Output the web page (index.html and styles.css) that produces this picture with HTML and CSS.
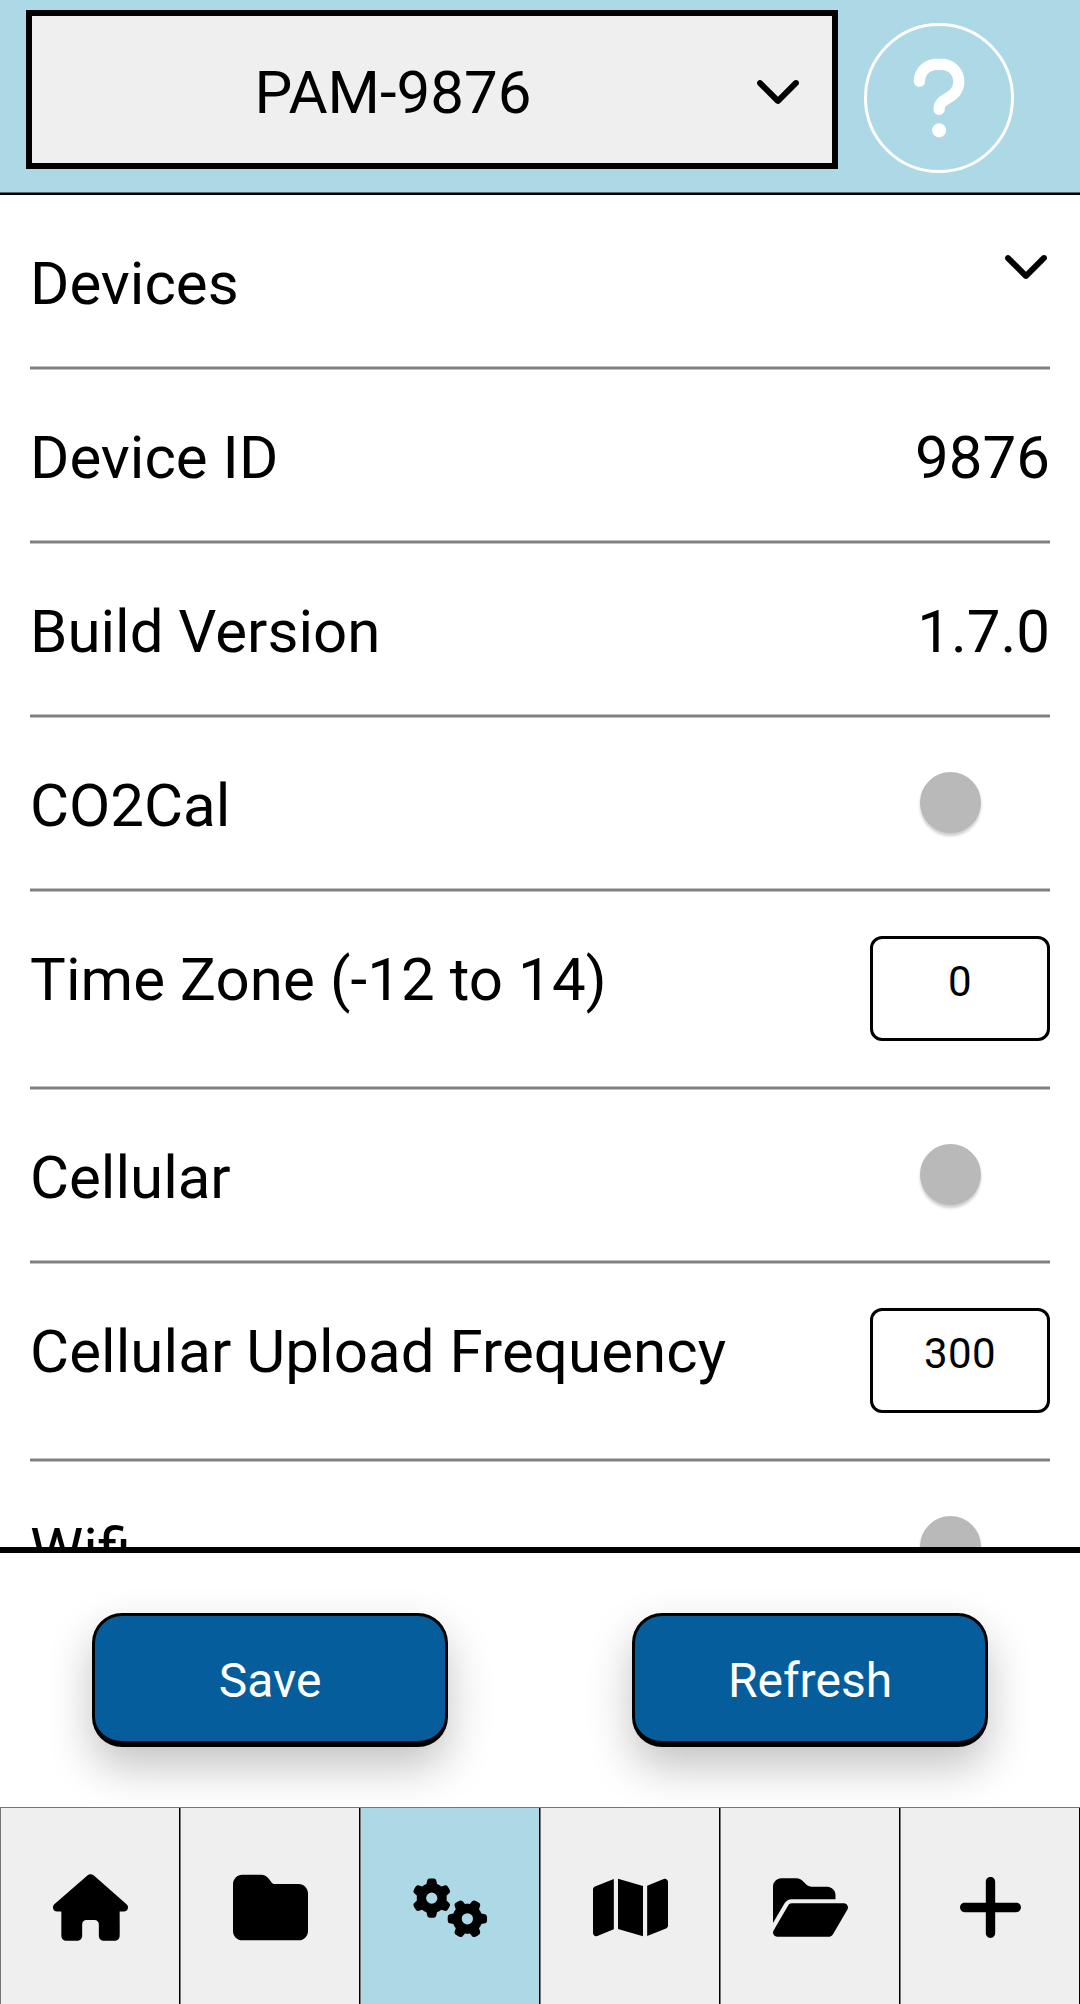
FILE: index.html
```html
<!DOCTYPE html>
<html lang="en">
<head>
<meta charset="utf-8">
<title>PAM-9876 Settings</title>
<link rel="stylesheet" href="styles.css">
</head>
<body>
<div class="app">
  <header class="header">
    <div class="select">
      <span class="select-label">PAM-9876</span>
      <svg class="chevron select-chevron" viewBox="0 0 512 512"><path d="M233.4 406.6c12.5 12.5 32.8 12.5 45.3 0l192-192c12.5-12.5 12.5-32.8 0-45.3s-32.8-12.5-45.3 0L256 338.7 86.6 169.4c-12.5-12.5-32.8-12.5-45.3 0s-12.5 32.8 0 45.3l192 192z"/></svg>
    </div>
    <div class="help">
      <svg class="help-icon" viewBox="0 0 320 512"><path d="M80 160c0-35.3 28.7-64 64-64h32c35.3 0 64 28.7 64 64v3.6c0 21.8-11.1 42.1-29.4 53.8l-42.2 27.1c-25.2 16.2-40.4 44.1-40.4 74V320c0 17.7 14.3 32 32 32s32-14.3 32-32v-1.4c0-8.2 4.2-15.8 11-20.2l42.2-27.1c36.6-23.6 58.8-64.1 58.8-107.7V160c0-70.7-57.3-128-128-128H144C73.3 32 16 89.3 16 160c0 17.7 14.3 32 32 32s32-14.3 32-32zm80 320a40 40 0 1 0 0-80 40 40 0 1 0 0 80z"/></svg>
    </div>
  </header>

  <main class="list">
    <div class="row">
      <span class="label">Devices</span>
      <svg class="chevron row-chevron" viewBox="0 0 512 512"><path d="M233.4 406.6c12.5 12.5 32.8 12.5 45.3 0l192-192c12.5-12.5 12.5-32.8 0-45.3s-32.8-12.5-45.3 0L256 338.7 86.6 169.4c-12.5-12.5-32.8-12.5-45.3 0s-12.5 32.8 0 45.3l192 192z"/></svg>
    </div>
    <hr class="rule">
    <div class="row"><span class="label">Device ID</span><span class="label">9876</span></div>
    <hr class="rule">
    <div class="row"><span class="label">Build Version</span><span class="label">1.7.0</span></div>
    <hr class="rule">
    <div class="row"><span class="label">CO2Cal</span><span class="toggle"></span></div>
    <hr class="rule">
    <div class="row row-tall"><span class="label">Time Zone (-12 to 14)</span><span class="field">0</span></div>
    <hr class="rule">
    <div class="row"><span class="label">Cellular</span><span class="toggle"></span></div>
    <hr class="rule">
    <div class="row row-tall"><span class="label">Cellular Upload Frequency</span><span class="field">300</span></div>
    <hr class="rule">
    <div class="row"><span class="label">Wifi</span><span class="toggle"></span></div>
  </main>

  <section class="actions">
    <div class="action"><button class="button">Save</button></div>
    <div class="action"><button class="button">Refresh</button></div>
  </section>

  <nav class="tabs">
    <div class="tab"><svg class="icon" viewBox="0 0 576 512"><path d="M575.8 255.5c0 18-15 32.1-32 32.1h-32l.7 160.2c0 2.7-.2 5.4-.5 8.1V472c0 22.1-17.9 40-40 40H456c-1.1 0-2.2 0-3.3-.1c-1.4 .1-2.8 .1-4.2 .1H416 392c-22.1 0-40-17.9-40-40V448 384c0-17.7-14.3-32-32-32H256c-17.7 0-32 14.3-32 32v64 24c0 22.1-17.9 40-40 40H160 128.1c-1.5 0-3-.1-4.5-.2c-1.2 .1-2.4 .2-3.6 .2H104c-22.1 0-40-17.9-40-40V360c0-.9 0-1.9 .1-2.8V287.6H32c-18 0-32-14-32-32.1c0-9 3-17 10-24L266.4 8c7-7 15-8 22-8s15 2 21 7L564.8 231.5c8 7 12 15 11 24z"/></svg></div>
    <div class="tab"><svg class="icon" viewBox="0 0 512 512"><path d="M64 480H448c35.3 0 64-28.7 64-64V160c0-35.3-28.7-64-64-64H288c-10.1 0-19.6-4.7-25.6-12.8L243.2 57.6C231.1 41.5 212.1 32 192 32H64C28.7 32 0 60.7 0 96V416c0 35.3 28.7 64 64 64z"/></svg></div>
    <div class="tab tab-active"><svg class="icon" viewBox="0 0 640 512"><path d="M308.5 135.3c7.1-6.3 9.9-16.2 6.2-25c-2.3-5.3-4.8-10.5-7.6-15.5L304 89.4c-3-5-6.3-9.9-9.8-14.6c-5.7-7.6-15.7-10.1-24.7-7.1l-28.2 9.3c-10.7-8.8-23-16-36.2-20.9L199 27.1c-1.9-9.3-9.1-16.7-18.5-17.8C173.9 8.4 167.2 8 160.4 8h-.7c-6.8 0-13.5 .4-20.1 1.2c-9.4 1.1-16.6 8.6-18.5 17.8L115 56.1c-13.3 5-25.5 12.1-36.2 20.9L50.5 67.8c-9-3-19-.5-24.7 7.1c-3.5 4.7-6.8 9.6-9.9 14.6l-3 5.3c-2.8 5-5.3 10.2-7.6 15.6c-3.7 8.7-.9 18.6 6.2 25l22.2 19.8C32.6 161.9 32 168.9 32 176s.6 14.1 1.7 20.9L11.5 216.7c-7.1 6.3-9.9 16.2-6.2 25c2.3 5.3 4.8 10.5 7.6 15.6l3 5.2c3 5.1 6.3 9.9 9.9 14.6c5.7 7.6 15.7 10.1 24.7 7.1l28.2-9.3c10.7 8.8 23 16 36.2 20.9l6.1 29.1c1.9 9.3 9.1 16.7 18.5 17.8c6.7 .8 13.5 1.2 20.4 1.2s13.7-.4 20.4-1.2c9.4-1.1 16.6-8.6 18.5-17.8l6.1-29.1c13.3-5 25.5-12.1 36.2-20.9l28.2 9.3c9 3 19 .5 24.7-7.1c3.5-4.7 6.8-9.5 9.8-14.6l3.1-5.4c2.8-5 5.3-10.2 7.6-15.5c3.7-8.7 .9-18.6-6.2-25l-22.2-19.8c1.1-6.8 1.7-13.8 1.7-20.9s-.6-14.1-1.7-20.9l22.2-19.8zM112 176a48 48 0 1 1 96 0 48 48 0 1 1 -96 0zM504.7 500.5c6.3 7.1 16.2 9.9 25 6.2c5.3-2.3 10.5-4.8 15.5-7.6l5.4-3.1c5-3 9.9-6.3 14.6-9.8c7.6-5.7 10.1-15.7 7.1-24.7l-9.3-28.2c8.8-10.7 16-23 20.9-36.2l29.1-6.1c9.3-1.9 16.7-9.1 17.8-18.5c.8-6.7 1.2-13.5 1.2-20.4s-.4-13.7-1.2-20.4c-1.1-9.4-8.6-16.6-17.8-18.5L583.9 307c-5-13.3-12.1-25.5-20.9-36.2l9.3-28.2c3-9 .5-19-7.1-24.7c-4.7-3.5-9.6-6.8-14.6-9.9l-5.3-3c-5-2.8-10.2-5.3-15.6-7.6c-8.7-3.7-18.6-.9-25 6.2l-19.8 22.2c-6.8-1.1-13.8-1.7-20.9-1.7s-14.1 .6-20.9 1.7l-19.8-22.2c-6.3-7.1-16.2-9.9-25-6.2c-5.3 2.3-10.5 4.8-15.6 7.6l-5.2 3c-5.1 3-9.9 6.3-14.6 9.9c-7.6 5.7-10.1 15.7-7.1 24.7l9.3 28.2c-8.8 10.7-16 23-20.9 36.2L315.1 313c-9.3 1.9-16.7 9.1-17.8 18.5c-.8 6.7-1.2 13.5-1.2 20.4s.4 13.7 1.2 20.4c1.1 9.4 8.6 16.6 17.8 18.5l29.1 6.1c5 13.3 12.1 25.5 20.9 36.2l-9.3 28.2c-3 9-.5 19 7.1 24.7c4.7 3.5 9.5 6.8 14.6 9.8l5.4 3.1c5 2.8 10.2 5.3 15.5 7.6c8.7 3.7 18.6 .9 25-6.2l19.8-22.2c6.8 1.1 13.8 1.7 20.9 1.7s14.1-.6 20.9-1.7l19.8 22.2zM464 304a48 48 0 1 1 0 96 48 48 0 1 1 0-96z"/></svg></div>
    <div class="tab"><svg class="icon" viewBox="0 0 576 512"><path d="M384 476.1L192 421.2V35.9L384 90.8V476.1zm32-1.2V88.4L543.1 37.5c15.8-6.3 32.9 5.3 32.9 22.3V394.6c0 9.8-6 18.6-15.1 22.3L416 474.8zM15.1 95.1L160 37.2V423.6L32.9 474.5C17.1 480.8 0 469.2 0 452.2V117.4c0-9.8 6-18.6 15.1-22.3z"/></svg></div>
    <div class="tab"><svg class="icon" viewBox="0 0 576 512"><path d="M88.7 223.8L0 375.8V96C0 60.7 28.7 32 64 32H181.5c17 0 33.3 6.7 45.3 18.7l26.5 26.5c12 12 28.3 18.7 45.3 18.7H416c35.3 0 64 28.7 64 64v32H144c-22.8 0-43.8 12.1-55.3 31.8zm27.6 16.1C122.1 230 132.6 224 144 224H544c11.5 0 22 6.1 27.7 16.1s5.7 22.2-.1 32.1l-112 192C453.9 474 443.4 480 432 480H32c-11.5 0-22-6.1-27.7-16.1s-5.7-22.2 .1-32.1l112-192z"/></svg></div>
    <div class="tab"><svg class="icon" viewBox="0 0 448 512"><path d="M256 80c0-17.7-14.3-32-32-32s-32 14.3-32 32V224H48c-17.7 0-32 14.3-32 32s14.3 32 32 32H192V432c0 17.7 14.3 32 32 32s32-14.3 32-32V288H400c17.7 0 32-14.3 32-32s-14.3-32-32-32H256V80z"/></svg></div>
  </nav>
</div>
</body>
</html>
```

FILE: styles.css
```css
* {
  box-sizing: border-box;
}

body {
  margin: 0;
  background: #fff;
  color: #000;
  font-family: Roboto, "Liberation Sans", sans-serif;
  font-size: 60px;
}

.app {
  display: flex;
  flex-direction: column;
  width: 1080px;
  height: 2004px;
  overflow: hidden;
}

.header {
  display: flex;
  align-items: flex-start;
  flex: none;
  gap: 26px;
  height: 195px;
  padding: 10px 26px 0;
  background: #add8e6;
  box-shadow: inset 0 -2px #000, inset 0 -3px #56676d;
}

.select {
  display: flex;
  align-items: center;
  width: 812px;
  height: 159px;
  padding-right: 30px;
  border: 6px solid #000;
  background: #efefef;
}

.select-label {
  flex: 1;
  padding-top: 6px;
  line-height: 70px;
  text-align: center;
}

.chevron {
  flex: none;
  width: 48px;
  height: 48px;
}

.select-chevron {
  margin-bottom: 2px;
}

.help {
  display: flex;
  align-items: center;
  justify-content: center;
  width: 150px;
  height: 150px;
  margin-top: 13px;
  border: 3px solid #fff;
  border-radius: 50%;
}

.help-icon {
  height: 90px;
  fill: #fff;
}

.list {
  flex: none;
  height: 1358px;
  padding: 1px 30px 0;
  border-bottom: 6px solid #000;
  overflow: hidden;
}

.row {
  display: flex;
  align-items: flex-start;
  justify-content: space-between;
  height: 170px;
}

.row-tall {
  height: 194px;
}

.label {
  margin-top: 53px;
  line-height: 70px;
}

.row-tall .label {
  letter-spacing: 0.08px;
}

.row-chevron {
  margin-top: 44px;
}

.rule {
  height: 4px;
  margin: 0;
  border: solid #c0c0c0;
  border-width: 1px 0;
  background: #808080;
}

.toggle {
  width: 61px;
  height: 61px;
  margin: 54px 69px 0 0;
  border-radius: 50%;
  background: #b9b9b9;
  box-shadow: 0 3px 3px rgba(0, 0, 0, 0.2);
}

.field {
  width: 180px;
  height: 105px;
  margin-top: 44px;
  padding-top: 18px;
  border: 3px solid #000;
  border-radius: 12px;
  font-size: 42px;
  line-height: 50px;
  letter-spacing: 0.4px;
  text-align: center;
}

.actions {
  display: flex;
  flex: none;
  height: 254px;
  padding-top: 60px;
}

.action {
  display: flex;
  align-items: flex-start;
  justify-content: center;
  flex: 1;
}

.button {
  width: 356px;
  height: 134px;
  padding: 4px 0 0;
  border: 3px solid #000;
  border-bottom-width: 6px;
  border-radius: 30px;
  background: #065d9c;
  box-shadow: 0 20px 45px rgba(0, 0, 0, 0.24);
  color: #fff;
  font-family: inherit;
  font-size: 48px;
}

.tabs {
  display: flex;
  flex: none;
  height: 201px;
}

.tab {
  display: flex;
  align-items: center;
  justify-content: center;
  width: 180px;
  padding-bottom: 2px;
  border: solid #767676;
  border-width: 1px 0 0 1px;
  background: #efefef;
  box-shadow: inset -1px 0 #000;
}

.tab-active {
  background: #add8e6;
}

.icon {
  width: 75px;
  height: 75px;
}
```
